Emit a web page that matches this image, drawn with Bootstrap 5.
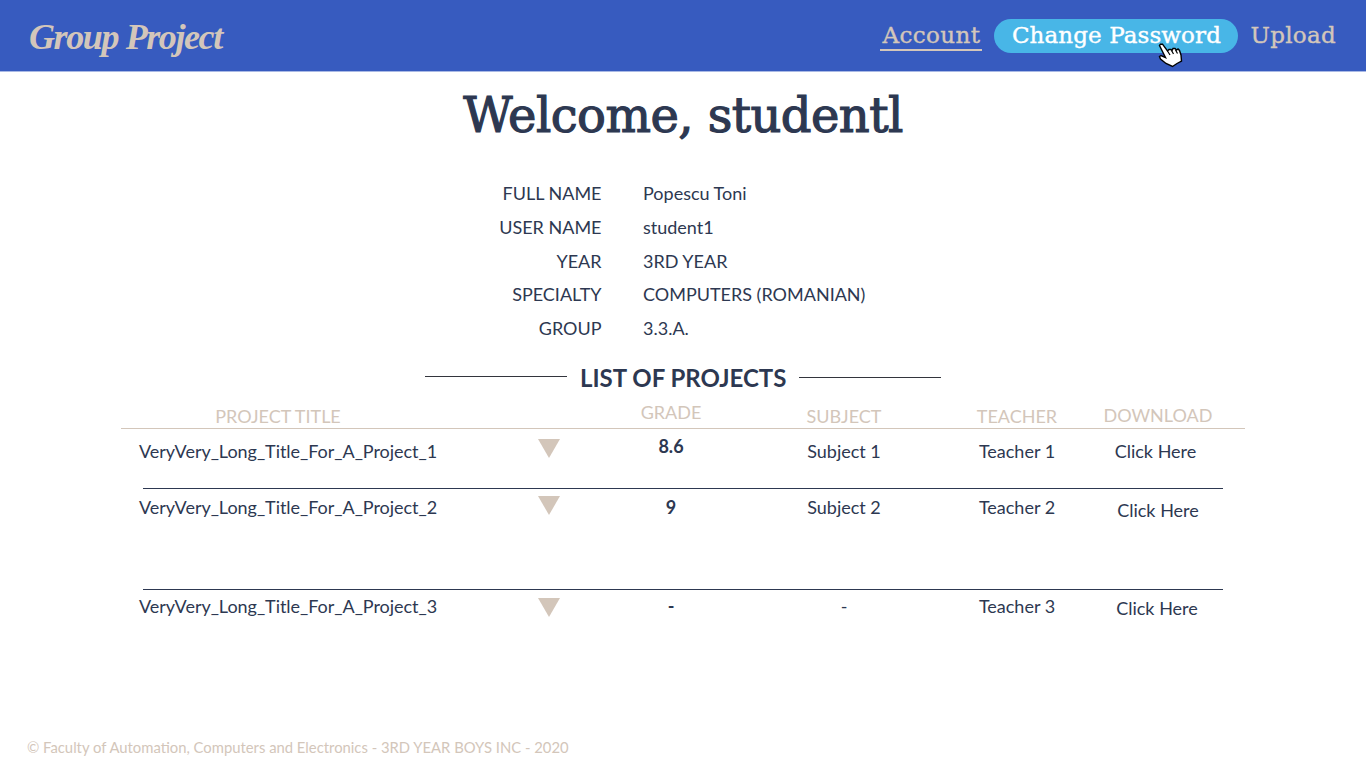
<!DOCTYPE html>
<html lang="en">
<head>
<meta charset="utf-8">
<meta name="viewport" content="width=device-width, initial-scale=1">
<title>Group Project</title>
<link href="https://cdn.jsdelivr.net/npm/bootstrap@5.3.0/dist/css/bootstrap.min.css" rel="stylesheet">
<style>
:root{--sand:#d3c6ba;--ink:#2d3851;--royal:#375bbf;--sky:#48b6e7}
body{font:18px/24px Lato,sans-serif;color:var(--ink);background:#fff;height:768px;overflow:hidden}
.topbar{height:72px;background:var(--royal);border-bottom:1px solid #a9b9e5;padding:18px 30px 0 29px}
.brand-script{font:italic bold 36px/38px "Liberation Serif",serif;color:var(--sand);letter-spacing:-1.4px}
.slab{font-family:"DejaVu Serif",serif}
.topbar .nav-link{font-size:23px;line-height:34px;color:var(--sand);padding:0;height:34px;-webkit-text-stroke:.4px currentColor}
.topbar .is-current{border-bottom:2px solid var(--sand);height:33px;width:102px;text-align:center;letter-spacing:.4px}
.topbar .pill{background:var(--sky);color:#fff;border-radius:17px;width:244px;text-align:center;margin:1px 12px 0;line-height:33px;letter-spacing:.1px}
.topbar .upload{letter-spacing:.3px}
.pointer{left:164px;top:24px}
h1.slab{font-size:48px;line-height:60px;letter-spacing:-.55px;margin:13px 0 0;-webkit-text-stroke:1.2px var(--ink)}
.facts{display:grid;grid-template-columns:601.5px 1fr;column-gap:41.5px;grid-auto-rows:33.75px;margin-top:36px}
.list-head{margin-top:10px;height:40px}
.list-head h2{font-size:24px;line-height:36px;width:206px;margin:0 13px}
.rule{width:142px;height:1px;background:#33353d;margin-top:16px}
.rule-end{margin-top:17px}
.projects{width:1124px;margin-left:121px}
.line{display:grid;grid-template-columns:355px 146px 98px 248px 98px 179px;text-align:center}
.line-head{height:29px;color:var(--sand);border-bottom:1px solid var(--sand);padding-top:4px}
.line-head div:first-child{padding-right:41px}
.line-head div:last-child{padding-left:5px;margin-top:-1px}
.line .title{text-align:left;padding-left:18px;letter-spacing:-.04px}
.sep{height:1px;background:var(--ink);margin:0 22px}
.tri{width:22px;height:19px;display:block;margin:0 auto;fill:var(--sand)}
.r1{height:59px;padding-top:10px}
.r2{height:100px;padding-top:6px}
.r3{padding-top:4px}
.r2 .tri{margin-top:1px}
.r3 .tri{margin-top:4px}
.r2 div:last-child{padding:3px 0 0 5px}
.r3 div:last-child{padding:2px 0 0 3px}
.up4{margin-top:-4px}
.up5{margin-top:-5px}
.line a{color:inherit;text-decoration:none}
footer{font-size:14.82px;color:var(--sand);padding:0 0 9px 27px}
</style>
</head>
<body class="d-flex flex-column">
<nav class="topbar d-flex justify-content-between align-items-start flex-shrink-0">
  <a class="brand-script text-decoration-none text-nowrap" href="#">Group Project</a>
  <div class="nav slab flex-nowrap text-nowrap">
    <a class="nav-link is-current" href="#">Account</a>
    <a class="nav-link pill position-relative" href="#">Change Password
      <svg class="pointer position-absolute" width="26" height="26" viewBox="0 0 26 26"><path d="M1.5 2.5 2.5 1.2H4.5L9.5 8 11 6.5H13L14 7.5 15 5.5H17L18.5 7 20 6 21.5 7.5 23 12 23.5 18 19 20.5 14.5 23.5 8 20.5 2.5 16 1.5 13.5 3 12.5 7.5 14.5Z" fill="#fff" stroke="#000" stroke-width="1.4"/><path d="M9.5 8 12 12M13.5 7.5 15.5 11M17.5 7 19.5 10.5" stroke="#000" stroke-width="1.2"/></svg></a>
    <a class="nav-link upload" href="#">Upload</a>
  </div>
</nav>
<main>
  <h1 class="slab text-center fw-normal">Welcome, studentl</h1>
  <div class="facts">
    <div class="text-end">FULL NAME</div><div>Popescu Toni</div>
    <div class="text-end">USER NAME</div><div>student1</div>
    <div class="text-end">YEAR</div><div>3RD YEAR</div>
    <div class="text-end">SPECIALTY</div><div>COMPUTERS (ROMANIAN)</div>
    <div class="text-end">GROUP</div><div>3.3.A.</div>
  </div>
  <div class="list-head d-flex justify-content-center">
    <div class="rule"></div><h2 class="fw-bold text-center text-nowrap">LIST OF PROJECTS</h2><div class="rule rule-end"></div>
  </div>
  <section class="projects">
    <div class="line line-head"><div>PROJECT TITLE</div><div></div><div class="up4">GRADE</div><div>SUBJECT</div><div>TEACHER</div><div>DOWNLOAD</div></div>
    <div class="line r1"><div class="title">VeryVery_Long_Title_For_A_Project_1</div><div><svg class="tri"><path d="M0 0h22L11 19z"/></svg></div><div class="fw-bold up5">8.6</div><div>Subject 1</div><div>Teacher 1</div><div><a href="#">Click Here</a></div></div>
    <div class="sep"></div>
    <div class="line r2"><div class="title">VeryVery_Long_Title_For_A_Project_2</div><div><svg class="tri"><path d="M0 0h22L11 19z"/></svg></div><div class="fw-bold">9</div><div>Subject 2</div><div>Teacher 2</div><div><a href="#">Click Here</a></div></div>
    <div class="sep"></div>
    <div class="line r3"><div class="title">VeryVery_Long_Title_For_A_Project_3</div><div><svg class="tri"><path d="M0 0h22L11 19z"/></svg></div><div class="fw-bold">-</div><div>-</div><div>Teacher 3</div><div><a href="#">Click Here</a></div></div>
  </section>
</main>
<footer class="mt-auto">© Faculty of Automation, Computers and Electronics - 3RD YEAR BOYS INC - 2020</footer>
<script src="https://cdn.jsdelivr.net/npm/bootstrap@5.3.0/dist/js/bootstrap.bundle.min.js"></script>
</body>
</html>
